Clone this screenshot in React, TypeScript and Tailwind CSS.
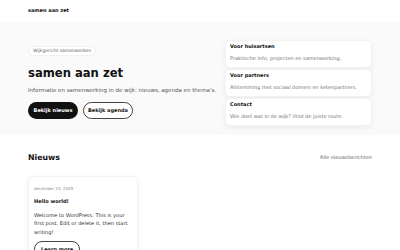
import React from 'react';

const cards = [
  { title: 'Voor huisartsen', text: 'Praktische info, projecten en samenwerking.' },
  { title: 'Voor partners', text: 'Afstemming met sociaal domein en ketenpartners.' },
  { title: 'Contact', text: 'Wie doet wat in de wijk? Vind de juiste route.' },
];

export default function App() {
  return (
    <div className="w-[400px] h-[250px] overflow-hidden bg-white text-[#111] font-['DejaVu_Sans',sans-serif]">
      {/* header */}
      <header className="h-[22px] flex items-center px-[28px] bg-white">
        <span className="text-[5px] font-bold">samen aan zet</span>
      </header>

      {/* hero */}
      <section className="h-[113px] bg-[#fafafa] px-[28px] pt-[8px] flex items-center justify-between">
        <div className="flex flex-col items-start">
          <span className="h-[10px] px-[4px] flex items-center rounded-full bg-white border border-[#f0f0f0] text-[4.5px] text-[#666]">
            Wijkgericht samenwerken
          </span>
          <h1 className="mt-[12px] text-[11.6px] leading-none font-bold">samen aan zet</h1>
          <p className="mt-[8px] text-[5.5px] leading-none text-[#555]">
            Informatie en samenwerking in de wijk: nieuws, agenda en thema's.
          </p>
          <div className="mt-[9px] flex gap-[5px]">
            <span className="h-[17px] w-[50px] flex items-center justify-center rounded-full bg-[#111] text-white text-[5px] font-bold">
              Bekijk nieuws
            </span>
            <span className="h-[17px] w-[50px] flex items-center justify-center rounded-full border border-[#444] bg-white text-[5px] font-bold">
              Bekijk agenda
            </span>
          </div>
        </div>

        <div className="w-[147px] flex flex-col gap-[1px]">
          {cards.map((c) => (
            <div
              key={c.title}
              className="h-[28px] rounded-[5px] bg-white px-[4px] pt-[2px] shadow-[0_2px_6px_rgba(0,0,0,0.06)] border border-[#f3f3f3]"
            >
              <div className="text-[5px] font-bold leading-[7px]">{c.title}</div>
              <div className="mt-[6px] text-[5px] leading-none text-[#777]">{c.text}</div>
            </div>
          ))}
        </div>
      </section>

      {/* news */}
      <section className="px-[28px] pt-[19px]">
        <div className="flex items-center justify-between">
          <h2 className="text-[7.8px] font-bold leading-none">Nieuws</h2>
          <span className="text-[5px] text-[#666]">Alle nieuwsberichten</span>
        </div>
        <div className="mt-[14px] grid grid-cols-3 gap-[7px]">
          <div className="rounded-[5px] bg-white px-[5px] pt-[10px] pb-[8px] border border-[#f3f3f3] shadow-[0_2px_6px_rgba(0,0,0,0.06)]">
            <div className="text-[4px] text-[#888] leading-none">december 23, 2025</div>
            <div className="mt-[8px] text-[5.1px] font-bold leading-none">Hello world!</div>
            <p className="mt-[7px] text-[5.1px] leading-[8.5px] text-[#333]">
              Welcome to WordPress. This is your first post. Edit or delete it, then start writing!
            </p>
            <span className="mt-[5px] flex w-fit h-[16px] px-[6px] items-center rounded-full border border-[#444] text-[5px] font-bold">
              Learn more
            </span>
          </div>
        </div>
      </section>
    </div>
  );
}
